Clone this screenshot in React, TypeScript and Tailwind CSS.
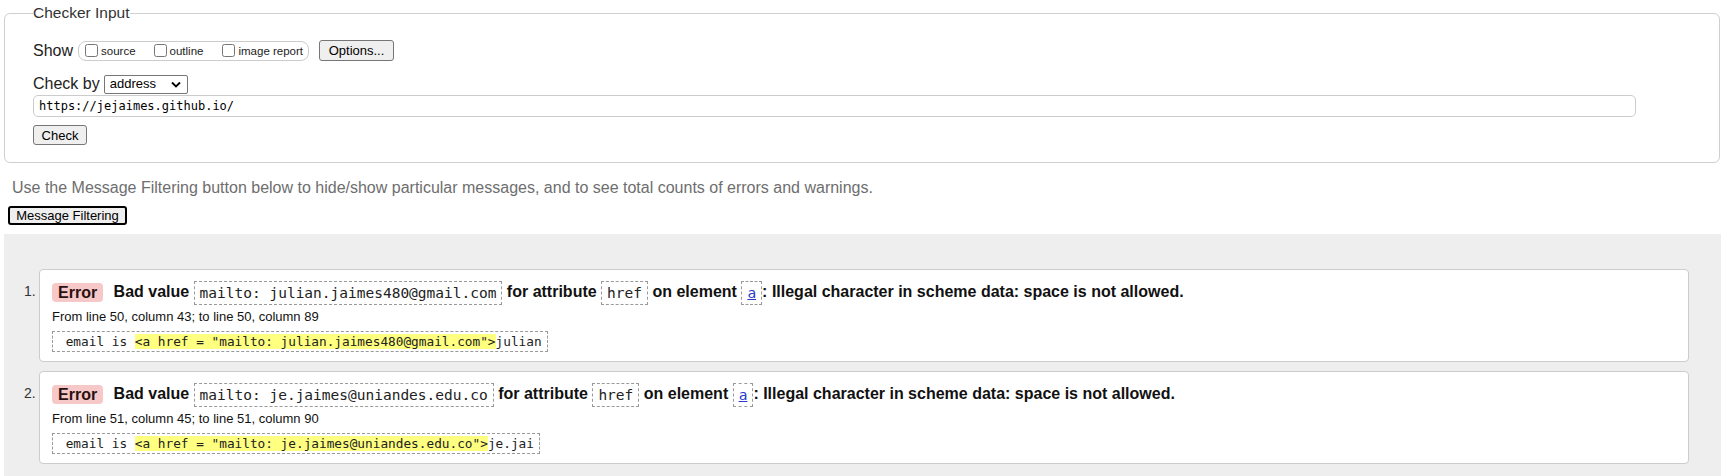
import React from 'react';

const messages = [
  {
    n: 1,
    value: 'mailto: julian.jaimes480@gmail.com',
    where: 'From line 50, column 43; to line 50, column 89',
    hl: '<a href = "mailto: julian.jaimes480@gmail.com">',
    tail: 'julian',
  },
  {
    n: 2,
    value: 'mailto: je.jaimes@uniandes.edu.co',
    where: 'From line 51, column 45; to line 51, column 90',
    hl: '<a href = "mailto: je.jaimes@uniandes.edu.co">',
    tail: 'je.jai',
  },
];

function Code({ children }: { children: React.ReactNode }) {
  return (
    <code className="inline-block align-middle h-[24px] leading-[22px] px-[5px] border border-dashed border-[#9a9a9a] bg-white text-[14.5px] font-normal text-[#222] font-['DejaVu_Sans_Mono',monospace]">
      {children}
    </code>
  );
}

function Box({ label }: { label: string }) {
  return (
    <label className="flex items-center gap-[3px] text-[11.5px] text-[#222]">
      <input type="checkbox" className="w-[13px] h-[13px]" />
      <span className="pt-[2px]">{label}</span>
    </label>
  );
}

export default function App() {
  return (
    <div className="h-[476px] w-full overflow-hidden bg-white flex flex-col font-['Liberation_Sans',Arial,sans-serif] text-[#222]">
      {/* formulario de entrada */}
      <fieldset className="ml-[4px] mr-[1px] mt-[4px] border border-[#cfcfcf] rounded-[6px] pl-[28px] pb-[17px]">
        <legend className="text-[15.5px] leading-[18px] text-[#333]">Checker Input</legend>

        <div className="flex items-center h-[23px] mt-[17px]">
          <span className="text-[16px]">Show</span>
          <div className="ml-[5px] h-[20px] flex items-center border border-[#cccccc] rounded-[8px] pl-[6px] pr-[5px]">
            <Box label="source" />
            <div className="ml-[18px]">
              <Box label="outline" />
            </div>
            <div className="ml-[19px]">
              <Box label="image report" />
            </div>
          </div>
          <button className="ml-[10px] h-[21px] w-[75px] bg-[#efefef] border border-[#767676] rounded-[3px] text-[13px] text-black">
            Options...
          </button>
        </div>

        <div className="flex items-center h-[20px] mt-[12px]">
          <span className="text-[16px]">Check by</span>
          <div className="ml-[4px] h-[19px] w-[84px] flex items-center justify-between border border-[#767676] rounded-[2px] pl-[5px] pr-[6px] text-[13px] text-black">
            address
            <svg width="10" height="7" viewBox="0 0 10 7">
              <path d="M1 1.5 L5 5.5 L9 1.5" fill="none" stroke="#000" strokeWidth="1.8" />
            </svg>
          </div>
        </div>

        <div className="mt-[1px] w-[1603px] h-[22px] flex items-center border border-[#cccccc] rounded-[5px] pl-[5px] text-[12px] text-black font-['DejaVu_Sans_Mono',monospace]">
          https://jejaimes.github.io/
        </div>

        <div className="mt-[8px] flex">
          <button className="h-[20px] w-[54px] bg-[#efefef] border border-[#767676] rounded-[3px] text-[13px] text-black">
            Check
          </button>
        </div>
      </fieldset>

      <p className="mt-[16px] pl-[12px] text-[16px] leading-[18px] text-[#6e6e6e]">
        Use the Message Filtering button below to hide/show particular messages, and to see total counts of errors and warnings.
      </p>

      <div className="mt-[9px] pl-[8px] flex">
        <button className="h-[19px] w-[119px] bg-[#efefef] border-2 border-black rounded-[3px] text-[13px] leading-none text-black">
          Message Filtering
        </button>
      </div>

      {/* resultados */}
      <div className="mt-[9px] ml-[4px] flex-1 bg-[#eeeeee] pt-[35px] pl-[20px] pr-[32px]">
        <ol className="flex flex-col gap-[9px]">
          {messages.map((m) => (
            <li key={m.n} className="flex">
              <span className="w-[15px] pt-[14px] text-[14px] leading-[16px] text-[#333]">{m.n}.</span>
              <div className="flex-1 bg-white border border-[#cccccc] rounded-[4px] pl-[12px] pt-[10px] pb-[9px]">
                <div className="h-[24px] leading-[24px] whitespace-nowrap text-[16px] font-bold text-[#111]">
                  <span className="inline-block align-middle h-[19px] leading-[19px] px-[6px] mr-[6px] rounded-[4px] bg-[#f6c8c8] text-[#2a1010]">
                    Error
                  </span>{' '}
                  Bad value <Code>{m.value}</Code> for attribute <Code>href</Code> on element{' '}
                  <Code>
                    <a href="#" className="text-[#2a3ccc] underline">a</a>
                  </Code>
                  : Illegal character in scheme data: space is not allowed.
                </div>
                <div className="mt-[5px] text-[13px] leading-[16px] text-[#111]">{m.where}</div>
                <div className="mt-[6px] flex">
                  <code className="inline-block h-[21px] leading-[19px] pl-[5px] pr-[5px] border border-dashed border-[#9a9a9a] whitespace-pre text-[12.75px] text-[#222] font-['DejaVu_Sans_Mono',monospace]">
                    {' email is '}
                    <b className="font-normal bg-[#ffff80]">{m.hl}</b>
                    {m.tail}
                  </code>
                </div>
              </div>
            </li>
          ))}
        </ol>
      </div>
    </div>
  );
}
